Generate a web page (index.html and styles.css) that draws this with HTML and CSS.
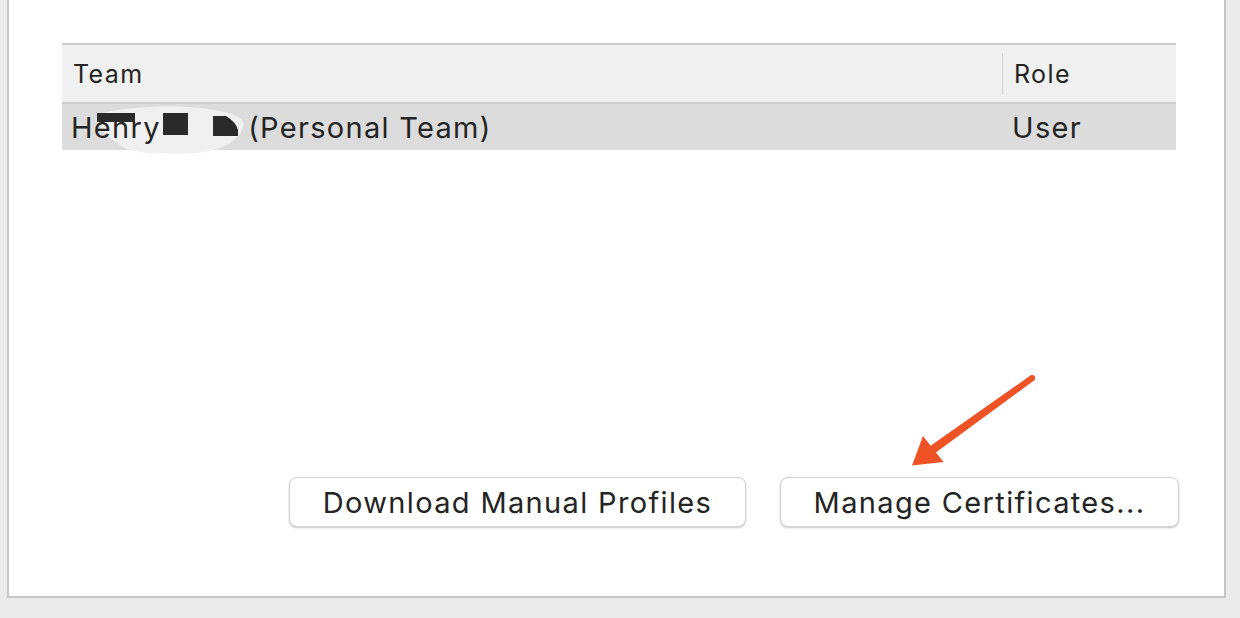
FILE: index.html
```html
<!DOCTYPE html>
<html lang="en">
<head>
<meta charset="utf-8">
<title>Accounts</title>
<link rel="stylesheet" href="styles.css">
</head>
<body>
<div class="window">
  <div class="panel">
    <div class="table">
      <div class="thead">
        <div class="th col-team">Team</div>
        <div class="th col-role">Role</div>
      </div>
      <div class="trow selected">
        <div class="td col-team">
          <svg class="smear" width="160" height="48" viewBox="0 0 160 48" aria-hidden="true">
            <path d="M4 8 C30 0, 90 -2, 120 4 C140 8, 150 12, 148 20 C146 32, 132 42, 110 46 C80 49, 40 48, 30 42 C16 34, 0 22, 4 8 Z" fill="#f0f0f0"/>
          </svg>
          <span class="name">Henry<span class="redacted"></span> (Personal Team)</span>
        </div>
        <div class="td col-role">User</div>
      </div>
    </div>
    <div class="actions">
      <button class="btn btn-download">Download Manual Profiles</button>
      <button class="btn btn-certs">Manage Certificates...</button>
    </div>
  </div>
</div>

<svg class="redaction" width="170" height="52" viewBox="0 0 170 52" aria-hidden="true">
  <rect x="7" y="12" width="38" height="9" fill="#2a2a2a"/>
  <rect x="73" y="12" width="25" height="22" fill="#2a2a2a"/>
  <path d="M123 15 H136 Q146 21 148 29 V35 H123 Z" fill="#2a2a2a"/>
</svg>

<svg class="arrow" width="140" height="110" viewBox="0 0 140 110" aria-hidden="true">
  <path d="M130.5 5.5 L134 10.5 L34.5 83.5 L29.5 76.5 Z" fill="#ee5326"/>
  <circle cx="132.2" cy="8" r="3" fill="#ee5326"/>
  <path d="M12 95.5 L23 66 L43.5 92 Z" fill="#ee5326"/>
</svg>
</body>
</html>
```

FILE: styles.css
```css
html, body {
  margin: 0;
  padding: 0;
}

body {
  width: 1240px;
  height: 618px;
  overflow: hidden;
  background: #ebebeb;
  font-family: Inter, "Liberation Sans", Arial, sans-serif;
  color: #242424;
  position: relative;
}

.window {
  padding-left: 7px;
  width: 1219px;
}

.panel {
  box-sizing: border-box;
  width: 1219px;
  height: 598px;
  background: #ffffff;
  border-left: 2px solid #c6c6c6;
  border-right: 2px solid #c6c6c6;
  border-bottom: 2px solid #c6c6c6;
  padding: 43px 48px 0 53px;
  display: flex;
  flex-direction: column;
}

.table {
  width: 1114px;
}

.thead {
  display: flex;
  height: 57px;
  background: #f0f0f0;
  border-top: 2px solid #cbcbcb;
  border-bottom: 2px solid #cdcdcd;
  font-size: 25px;
  letter-spacing: 1.4px;
  align-items: center;
}

.th {
  height: 100%;
  display: flex;
  align-items: center;
}

.thead .col-team {
  flex: 1;
  padding-left: 11px;
}

.thead .col-role {
  width: 174px;
  box-sizing: border-box;
  padding-left: 12px;
  position: relative;
}

.thead .col-role::before {
  content: "";
  position: absolute;
  left: 0;
  top: 8px;
  bottom: 7px;
  width: 1px;
  background: #d4d4d4;
}

.trow {
  display: flex;
  height: 46px;
  align-items: center;
  font-size: 29px;
  letter-spacing: 1.3px;
}

.trow.selected {
  background: #dcdcdc;
}

.trow .col-team {
  flex: 1;
  padding-left: 9px;
  white-space: nowrap;
  position: relative;
  height: 100%;
  display: flex;
  align-items: center;
}

.smear {
  position: absolute;
  left: 33px;
  top: 2px;
  z-index: 0;
}

.name {
  position: relative;
  z-index: 1;
}

.trow .col-role {
  width: 174px;
  box-sizing: border-box;
  padding-left: 10px;
}

.redacted {
  display: inline-block;
  width: 78px;
}

.actions {
  display: flex;
  justify-content: flex-end;
  gap: 34px;
  margin-top: 327px;
  margin-right: -3px;
}

.btn {
  box-sizing: border-box;
  height: 50px;
  background: #ffffff;
  border: 1px solid #d2d2d2;
  border-radius: 8px;
  box-shadow: 0 1px 2px rgba(0, 0, 0, 0.22);
  font-family: inherit;
  font-size: 29px;
  letter-spacing: 1.35px;
  color: #242424;
  padding: 0;
  text-align: center;
}

.btn-download {
  width: 457px;
}

.btn-certs {
  width: 399px;
}

.redaction {
  position: absolute;
  left: 90px;
  top: 101px;
}

.arrow {
  position: absolute;
  left: 900px;
  top: 370px;
}
```
